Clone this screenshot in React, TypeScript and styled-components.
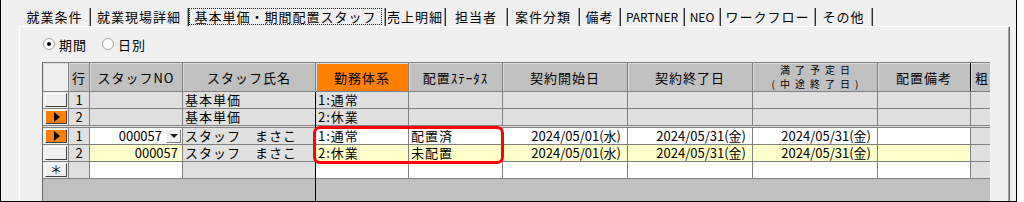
import styled, { createGlobalStyle } from 'styled-components';

const GlobalStyle = createGlobalStyle`
  html, body { margin: 0; padding: 0; background: #ffffff; }
  body {
    font-family: "Noto Sans CJK JP", "Noto Sans", sans-serif;
    font-size: 13px;
    color: #000;
  }
`;

const Window = styled.div`
  box-sizing: border-box;
  width: 1017px;
  height: 202px;
  padding: 8px 6px 0 18px;
  background: #f0f0f0;
  border-left: 1px solid #000;
  border-right: 1px solid #000;
  border-bottom: 1px solid #000;
  display: flex;
  flex-direction: column;
  overflow: hidden;
`;

const TabStrip = styled.div`
  display: flex;
  height: 18px;
  padding-left: 1px;
`;

const Tab = styled.div<{ $w: number; $latin?: boolean }>`
  box-sizing: border-box;
  flex: none;
  width: ${(p) => p.$w}px;
  height: 18px;
  display: flex;
  align-items: center;
  justify-content: center;
  padding-right: 1px;
  border-right: 1px solid #303030;
  box-shadow: inset -1px 0 0 #a0a0a0;
  font-size: ${(p) => (p.$latin ? 12 : 13)}px;
  letter-spacing: ${(p) => (p.$latin ? 0 : 1)}px;
  line-height: 16px;
  white-space: nowrap;
`;

const FocusBox = styled.span`
  box-sizing: border-box;
  flex: 1;
  align-self: stretch;
  margin: 0 2px 1px 0;
  border: 1px dotted #202020;
  display: flex;
  align-items: center;
  justify-content: center;
`;

const Panel = styled.div`
  flex: 1;
  min-height: 0;
  display: flex;
  flex-direction: column;
  background: #f0f0f0;
  border-top: 1px solid #ffffff;
  border-left: 1px solid #ffffff;
  border-right: 1px solid #696969;
  box-shadow: inset -1px 0 0 #a0a0a0;
`;

const RadioRow = styled.div`
  display: flex;
  align-items: center;
  gap: 15px;
  height: 20px;
  margin-top: 7px;
  padding-left: 23px;
`;

const RadioOption = styled.label`
  display: flex;
  align-items: center;
  gap: 4px;
  letter-spacing: 1px;
`;

const RadioCircle = styled.span`
  box-sizing: border-box;
  width: 12px;
  height: 12px;
  border-radius: 50%;
  background: #ffffff;
  border: 1px solid #a0a0a0;
  display: flex;
  align-items: center;
  justify-content: center;
`;

const RadioDot = styled.span`
  width: 4px;
  height: 4px;
  border-radius: 50%;
  background: #000;
`;

const Grid = styled.div`
  position: relative;
  box-sizing: border-box;
  width: 948px;
  flex: 1;
  min-height: 0;
  margin: 8px 0 0 22px;
  display: flex;
  border-top: 1px solid #808080;
  border-left: 1px solid #696969;
  background: #c0c0c0;
  overflow: hidden;
`;

const Pane = styled.div`
  flex: none;
  display: flex;
  flex-direction: column;
`;

const PaneBody = styled.div<{ $frozen?: boolean }>`
  flex: 1;
  border-right: ${(p) => (p.$frozen ? '1px solid #000' : 'none')};
`;

const HeaderRow = styled.div`
  box-sizing: border-box;
  display: flex;
  height: 29px;
  border-bottom: 1px solid #808080;
`;

const HeadCell = styled.div<{ $w: number; $bg?: string; $edge?: string; $start?: boolean }>`
  box-sizing: border-box;
  flex: none;
  width: ${(p) => p.$w}px;
  height: 100%;
  padding-left: ${(p) => (p.$start ? 4 : 0)}px;
  background: ${(p) => p.$bg ?? '#c0c0c0'};
  border-right: 1px solid ${(p) => p.$edge ?? '#808080'};
  box-shadow: inset 1px 1px 0 #dcdcdc;
  display: flex;
  align-items: center;
  justify-content: ${(p) => (p.$start ? 'flex-start' : 'center')};
  text-align: center;
  letter-spacing: 1px;
  white-space: nowrap;
`;

const HeadText = styled.span`
  display: block;
  font-size: 10px;
  line-height: 14.5px;
  letter-spacing: 5px;
  margin-right: -5px;
`;

const Row = styled.div`
  box-sizing: border-box;
  display: flex;
  height: 17px;
  border-bottom: 1px solid #808080;
`;

const Divider = styled.div`
  height: 1px;
  background: #e0e0e0;
  border-bottom: 1px solid #808080;
`;

const Cell = styled.div<{
  $w: number;
  $bg?: string;
  $align?: 'left' | 'right' | 'center';
  $pad?: number;
  $last?: boolean;
  $digits?: boolean;
}>`
  box-sizing: border-box;
  flex: none;
  width: ${(p) => p.$w}px;
  height: 100%;
  background: ${(p) => p.$bg ?? '#ffffff'};
  border-right: ${(p) => (p.$last ? 'none' : '1px solid #808080')};
  display: flex;
  align-items: center;
  justify-content: ${(p) =>
    p.$align === 'right' ? 'flex-end' : p.$align === 'center' ? 'center' : 'flex-start'};
  padding: ${(p) => (p.$align === 'right' ? `0 ${p.$pad ?? 6}px 0 0` : `0 0 0 ${p.$pad ?? 2}px`)};
  line-height: 16px;
  letter-spacing: ${(p) => (p.$digits ? 0 : 1)}px;
  white-space: nowrap;
`;

const SelCell = styled.div`
  box-sizing: border-box;
  flex: none;
  width: 26px;
  height: 100%;
  padding: 1px 1px 1px 2px;
  background: #f0f0f0;
  border-right: 1px solid #808080;
  display: flex;
`;

const SelButton = styled.div<{ $current?: boolean }>`
  box-sizing: border-box;
  flex: 1;
  background: ${(p) => (p.$current ? '#ff8000' : '#f0f0f0')};
  border: 1px solid;
  border-color: #ffffff #404040 #404040 #ffffff;
  display: flex;
  align-items: center;
  justify-content: center;
  font-size: 12px;
  line-height: 12px;
`;

const Arrow = styled.span`
  width: 0;
  height: 0;
  border-top: 5px solid transparent;
  border-bottom: 5px solid transparent;
  border-left: 6px solid #000;
  margin-left: 1px;
`;

const ComboButton = styled.span`
  box-sizing: border-box;
  flex: none;
  width: 15px;
  height: 14px;
  margin-left: 4px;
  background: #f0f0f0;
  border: 1px solid;
  border-color: #ffffff #808080 #808080 #ffffff;
  display: flex;
  align-items: center;
  justify-content: center;
`;

const ComboArrow = styled.span`
  width: 0;
  height: 0;
  border-left: 4px solid transparent;
  border-right: 4px solid transparent;
  border-top: 4px solid #202020;
`;

const Highlight = styled.div`
  position: absolute;
  left: 270px;
  top: 63px;
  width: 191px;
  height: 38px;
  box-sizing: border-box;
  border: 3px solid #ff0000;
  border-radius: 7px;
  pointer-events: none;
`;

const GRAY = '#e0e0e0';
const YELLOW = '#ffffcc';
const WHITE = '#ffffff';

const tabs: { label: string; w: number; latin?: boolean; active?: boolean }[] = [
  { label: '就業条件', w: 71 },
  { label: '就業現場詳細', w: 98 },
  { label: '基本単価・期間配置スタッフ', w: 197, active: true },
  { label: '売上明細', w: 60 },
  { label: '担当者', w: 62 },
  { label: '案件分類', w: 72 },
  { label: '備考', w: 41 },
  { label: 'PARTNER', w: 64, latin: true },
  { label: 'NEO', w: 36, latin: true },
  { label: 'ワークフロー', w: 95 },
  { label: 'その他', w: 57 },
];

type BodyRow = {
  sel: 'plain' | 'current' | 'new';
  no: string;
  bg: string;
  staffNo?: string;
  combo?: boolean;
  name?: string;
  kinmu?: string;
  status?: string;
  start?: string;
  end?: string;
  finish?: string;
};

const baseRows: BodyRow[] = [
  { sel: 'plain', no: '1', bg: GRAY, name: '基本単価', kinmu: '1:通常' },
  { sel: 'current', no: '2', bg: GRAY, name: '基本単価', kinmu: '2:休業' },
];

const staffRows: BodyRow[] = [
  {
    sel: 'current',
    no: '1',
    bg: WHITE,
    staffNo: '000057',
    combo: true,
    name: 'スタッフ　まさこ',
    kinmu: '1:通常',
    status: '配置済',
    start: '2024/05/01(水)',
    end: '2024/05/31(金)',
    finish: '2024/05/31(金)',
  },
  {
    sel: 'plain',
    no: '2',
    bg: YELLOW,
    staffNo: '000057',
    name: 'スタッフ　まさこ',
    kinmu: '2:休業',
    status: '未配置',
    start: '2024/05/01(水)',
    end: '2024/05/31(金)',
    finish: '2024/05/31(金)',
  },
  { sel: 'new', no: '', bg: WHITE },
];

function Selector({ kind }: { kind: BodyRow['sel'] }) {
  return (
    <SelCell>
      <SelButton $current={kind === 'current'}>
        {kind === 'current' && <Arrow />}
        {kind === 'new' && '＊'}
      </SelButton>
    </SelCell>
  );
}

function FrozenRow({ row }: { row: BodyRow }) {
  return (
    <Row>
      <Selector kind={row.sel} />
      <Cell $w={21} $bg={GRAY} $align="center" $pad={0} $digits>
        {row.no}
      </Cell>
      <Cell $w={93} $bg={row.bg} $align="right" $pad={row.combo ? 1 : 4} $digits>
        {row.staffNo}
        {row.combo && (
          <ComboButton>
            <ComboArrow />
          </ComboButton>
        )}
      </Cell>
      <Cell $w={132} $bg={GRAY} $last>
        {row.name}
      </Cell>
    </Row>
  );
}

function ScrollRow({ row }: { row: BodyRow }) {
  return (
    <Row>
      <Cell $w={93} $bg={row.bg}>{row.kinmu}</Cell>
      <Cell $w={94} $bg={row.bg}>{row.status}</Cell>
      <Cell $w={125} $bg={row.bg} $align="right" $digits>{row.start}</Cell>
      <Cell $w={125} $bg={row.bg} $align="right" $digits>{row.end}</Cell>
      <Cell $w={125} $bg={row.bg} $align="right" $digits>{row.finish}</Cell>
      <Cell $w={93} $bg={row.bg} />
      <Cell $w={60} $bg={GRAY} $last />
    </Row>
  );
}

export default function App() {
  return (
    <>
      <GlobalStyle />
      <Window>
        <TabStrip>
          {tabs.map((t) => (
            <Tab key={t.label} $w={t.w} $latin={t.latin}>
              {t.active ? <FocusBox>{t.label}</FocusBox> : t.label}
            </Tab>
          ))}
        </TabStrip>
        <Panel>
          <RadioRow>
            <RadioOption>
              <RadioCircle>
                <RadioDot />
              </RadioCircle>
              期間
            </RadioOption>
            <RadioOption>
              <RadioCircle />
              日別
            </RadioOption>
          </RadioRow>
          <Grid>
            <Pane>
              <HeaderRow>
                <HeadCell $w={26} $bg="#f0f0f0" />
                <HeadCell $w={21}>行</HeadCell>
                <HeadCell $w={93}>スタッフNO</HeadCell>
                <HeadCell $w={133}>スタッフ氏名</HeadCell>
              </HeaderRow>
              <PaneBody $frozen>
                {baseRows.map((r) => (
                  <FrozenRow key={'b' + r.no} row={r} />
                ))}
                <Divider />
                {staffRows.map((r, i) => (
                  <FrozenRow key={'s' + i} row={r} />
                ))}
              </PaneBody>
            </Pane>
            <Pane>
              <HeaderRow>
                <HeadCell $w={93} $bg="#ff8000">勤務体系</HeadCell>
                <HeadCell $w={94}>配置ｽﾃｰﾀｽ</HeadCell>
                <HeadCell $w={125}>契約開始日</HeadCell>
                <HeadCell $w={125}>契約終了日</HeadCell>
                <HeadCell $w={125}>
                  <HeadText>
                    満了予定日
                    <br />
                    (中途終了日)
                  </HeadText>
                </HeadCell>
                <HeadCell $w={93} $edge="#000">配置備考</HeadCell>
                <HeadCell $w={60} $start>粗</HeadCell>
              </HeaderRow>
              <PaneBody>
                {baseRows.map((r) => (
                  <ScrollRow key={'b' + r.no} row={r} />
                ))}
                <Divider />
                {staffRows.map((r, i) => (
                  <ScrollRow key={'s' + i} row={r} />
                ))}
              </PaneBody>
            </Pane>
            <Highlight />
          </Grid>
        </Panel>
      </Window>
    </>
  );
}
